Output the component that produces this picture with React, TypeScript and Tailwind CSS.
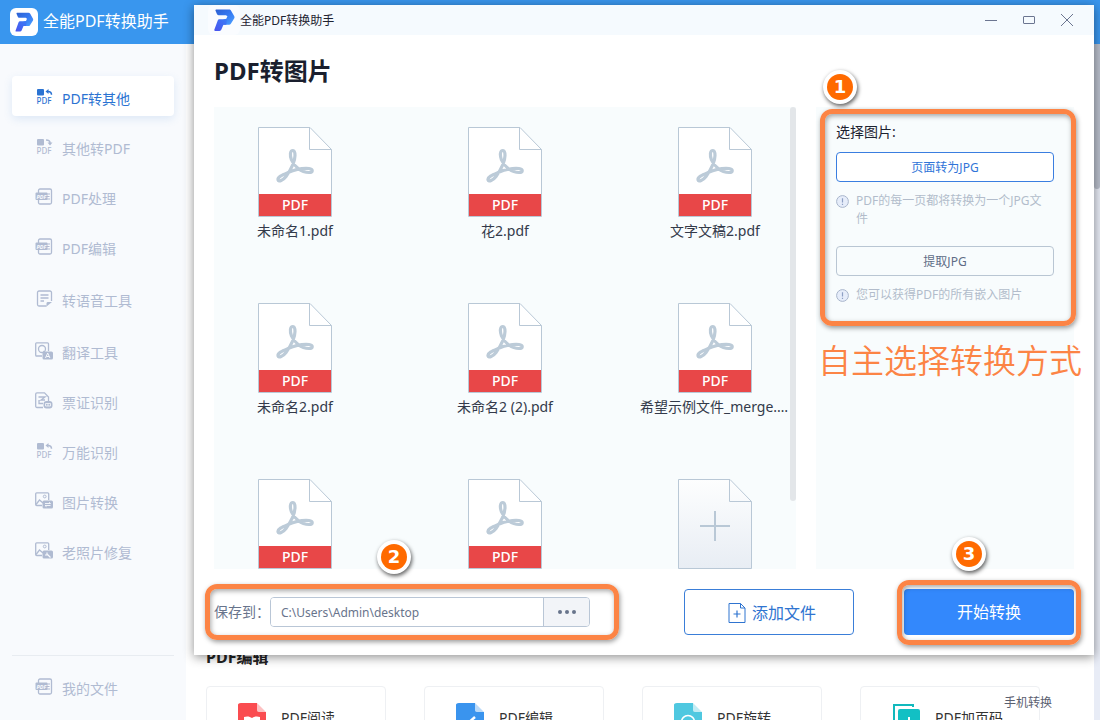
import React from "react";

const FONT = "font-['Noto_Sans','Noto_Sans_CJK_SC',sans-serif]";

function Logo({ className }: { className: string }) {
  return (
    <svg viewBox="0 0 28 28" className={className} aria-hidden="true">
      <defs>
        <linearGradient id="logoTop" x1="0" y1="0" x2="1" y2="1">
          <stop offset="0" stopColor="#2c5fd0" />
          <stop offset="0.5" stopColor="#3579f2" />
          <stop offset="1" stopColor="#4ea2ff" />
        </linearGradient>
        <linearGradient id="logoStem" x1="0" y1="1" x2="1" y2="0">
          <stop offset="0" stopColor="#4a52ee" />
          <stop offset="1" stopColor="#3b7cf6" />
        </linearGradient>
      </defs>
      <path
        d="M7.500 4.800h11c.8 0 1.300.3 1.700 1l2.800 5c.3.600.3 1 0 1.600l-3 4.800c-.4.600-.9.900-1.600.9H13l.5-4.600 2.500-.5 1-2.200-1.300-1H9.300c-.8 0-1.200-.3-1.500-1L6.600 6c-.3-.7 0-1.200.9-1.200z"
        fill="url(#logoTop)"
      />
      <path d="M10 13.300h6.500l-.5 4.800h-2.500l-1.900 4.500c-.3.700-.8 1-1.500 1H6.300c-.7 0-1-.5-.7-1.200l3-8.100c.2-.6.700-1 1.400-1z" fill="url(#logoStem)" />
    </svg>
  );
}

type IconKind = "left" | "right" | "pdf" | "note" | "translate" | "ticket" | "image" | "photo";

function SideIcon({ kind }: { kind: IconKind }) {
  if (kind === "left" || kind === "right") {
    return (
      <svg viewBox="0 0 18 18" className="size-[18px] shrink-0" fill="currentColor" aria-hidden="true">
        <rect x="2" y="1" width="7" height="6.500" rx="1" />
        {kind === "left" ? (
          <g>
            <path d="M10.500 3.500 13.500 1v5z" />
            <path d="M13 3.500c2.500 0 3.500 1 3.500 3.300" fill="none" stroke="currentColor" strokeWidth="1.500" />
          </g>
        ) : (
          <g>
            <path d="M12.500 4.500h5L15 7.500z" />
            <path d="M11 2c3 0 4 .8 4 3" fill="none" stroke="currentColor" strokeWidth="1.500" />
          </g>
        )}
        <text x="1.500" y="16" fontSize="8" fontFamily="Noto Sans, sans-serif" fontWeight="500">PDF</text>
      </svg>
    );
  }
  if (kind === "pdf") {
    return (
      <svg viewBox="0 0 18 18" className="size-[18px] shrink-0" fill="none" stroke="currentColor" aria-hidden="true">
        <rect x="3.500" y="1" width="13" height="15" rx="1.500" strokeWidth="1.300" />
        <rect x="0.500" y="4.500" width="12" height="7.500" rx="1" fill="currentColor" stroke="none" />
        <path d="M12 6h3M12 8.500h2.500M12 11h3" strokeWidth="1" />
        <text x="1.500" y="10.500" fontSize="5.500" fontWeight="700" fontStyle="italic" fill="#f8fafd" stroke="none" fontFamily="Noto Sans, sans-serif">PDF</text>
      </svg>
    );
  }
  if (kind === "note") {
    return (
      <svg viewBox="0 0 18 18" className="size-[18px] shrink-0" fill="none" stroke="currentColor" strokeWidth="1.300" aria-hidden="true">
        <path d="M16.500 11V2.500c0-.8-.7-1.500-1.500-1.500H4c-.8 0-1.500.7-1.500 1.500v12c0 .8.700 1.500 1.500 1.500h7.500M5.500 5h8M5.500 8h8M5.500 11H9" />
        <path d="M11.500 16.500v-3c0-1 .5-1.500 1.500-1.500h4z" fill="currentColor" stroke="none" />
      </svg>
    );
  }
  if (kind === "translate") {
    return (
      <svg viewBox="0 0 18 18" className="size-[18px] shrink-0" fill="none" stroke="currentColor" strokeWidth="1.300" aria-hidden="true">
        <path d="M7 14H1.500C1 14 .7 13.600.7 13V1.700C.7 1.200 1 .8 1.500.8h11c.6 0 1 .4 1 .9V9" />
        <circle cx="7" cy="7" r="3.500" />
        <path d="m8.500 9 2 2.500" />
        <rect x="7.500" y="9.500" width="10.500" height="8" rx="1.500" fill="currentColor" stroke="none" />
        <path d="m10.500 16 2.200-5 2.200 5M11.500 14.500h2.600" stroke="#f8fafd" strokeWidth="1" />
      </svg>
    );
  }
  if (kind === "ticket") {
    return (
      <svg viewBox="0 0 18 18" className="size-[18px] shrink-0" fill="none" stroke="currentColor" strokeWidth="1.300" aria-hidden="true">
        <path d="M8 15.500H2c-.8 0-1.300-.5-1.300-1.300V2C.7 1.300 1.200.8 2 .8h7.500L13.500 5v4M3.500 5H10L6 8h4M4 8v3.500h4" />
        <rect x="8.500" y="9" width="9" height="7.500" rx="3" fill="currentColor" stroke="none" />
        <path d="M10.500 11.500h5v2.500h-5zM13 11.500v2.500" stroke="#f8fafd" strokeWidth=".8" />
      </svg>
    );
  }
  return (
    <svg viewBox="0 0 18 18" className="size-[18px] shrink-0" fill="none" stroke="currentColor" strokeWidth="1.300" aria-hidden="true">
      <path d="M7 13.500H1.700c-.6 0-1-.4-1-1V1.800c0-.6.4-1 1-1h11c.6 0 1 .4 1 1V8" />
      <path d="M1 12.500 4.500 8l3.500 3" />
      <circle cx="9.700" cy="4.500" r="1.400" strokeWidth="1" />
      <rect x="7.500" y="8.500" width="10.500" height="8" rx="1.500" fill="currentColor" stroke="none" />
      {kind === "image" ? (
        <path d="M10 11.500h5.500L14 10.300M15.500 13.500H10l1.500 1.200" stroke="#f8fafd" strokeWidth=".9" />
      ) : (
        <path d="m12.500 12.500 3 3M12 10.500v2.500h-2" stroke="#f8fafd" strokeWidth="1.200" />
      )}
    </svg>
  );
}

const NAV: { label: string; kind: IconKind; tall?: boolean }[] = [
  { label: "PDF转其他", kind: "left" },
  { label: "其他转PDF", kind: "right" },
  { label: "PDF处理", kind: "pdf" },
  { label: "PDF编辑", kind: "pdf" },
  { label: "转语音工具", kind: "note", tall: true },
  { label: "翻译工具", kind: "translate" },
  { label: "票证识别", kind: "ticket" },
  { label: "万能识别", kind: "left" },
  { label: "图片转换", kind: "image" },
  { label: "老照片修复", kind: "photo" },
];

const FILES: { id: number; name?: string }[] = [
  { id: 1, name: "未命名1.pdf" },
  { id: 2, name: "花2.pdf" },
  { id: 3, name: "文字文稿2.pdf" },
  { id: 4, name: "未命名2.pdf" },
  { id: 5, name: "未命名2 (2).pdf" },
  { id: 6, name: "希望示例文件_merge.pdf" },
  { id: 7 },
  { id: 8 },
];

function PdfFileIcon() {
  return (
    <svg viewBox="0 0 74 90" className="h-[90px] w-[74px] shrink-0" fill="none" aria-hidden="true">
      <path d="M.5.500h51.500l21.500 22v67H.5z" fill="#fff" stroke="#b9c8d6" />
      <path d="M51.500.500v22h22" stroke="#b9c8d6" />
      <path
        d="M35 23.500c-3 0-3.300 4.500-1.500 9.500C36 39 43 45.500 51 45.500c4.300 0 4.300-3.600 0-4-7-.6-14 1-21 4-6 2.600-10.500 4.500-10 7.300.6 2.600 5 .6 8-3.300 4.500-6.300 9-15 9-21 0-3.300-.6-5-2-5z"
        stroke="#bccbd8"
        strokeWidth="3.200"
        strokeLinejoin="round"
      />
      <rect x="1" y="67" width="72" height="22" fill="#e84748" />
      <text x="37" y="83" fontSize="14" fontWeight="500" fill="#fff" textAnchor="middle" fontFamily="Noto Sans, sans-serif">PDF</text>
    </svg>
  );
}

function AddFileTile() {
  return (
    <svg viewBox="0 0 74 90" className="h-[90px] w-[74px] shrink-0" fill="none" aria-hidden="true">
      <defs>
        <linearGradient id="tile" x1="0" y1="0" x2="0" y2="1">
          <stop offset="0" stopColor="#fdfefe" />
          <stop offset="1" stopColor="#e8edf4" />
        </linearGradient>
      </defs>
      <path d="M.5.500h51.500l21.500 22v67H.5z" fill="url(#tile)" stroke="#b9c8d6" />
      <path d="M51.500.500v22h22" stroke="#b9c8d6" />
      <path d="M22 47h30M37 32v30" stroke="#b9c8d6" strokeWidth="2" />
    </svg>
  );
}

function Step({ n, className }: { n: number; className: string }) {
  return (
    <span
      className={`absolute z-10 flex size-[34px] items-center justify-center rounded-full bg-white shadow-[1px_2px_4px_rgba(0,0,0,0.65)] ${className}`}
    >
      <span className="flex size-[26px] items-center justify-center rounded-full bg-[#ff6a00] font-['DejaVu_Sans',sans-serif] text-[18px] leading-none font-bold text-white">
        {n}
      </span>
    </span>
  );
}

function Frame({ className }: { className: string }) {
  return (
    <span
      className={`pointer-events-none absolute rounded-xl border-[5px] border-[#fc8445] shadow-[1px_2px_5px_rgba(0,0,0,0.4),inset_1px_2px_5px_rgba(0,0,0,0.35)] ${className}`}
    />
  );
}

function Hint({ children }: { children: React.ReactNode }) {
  return (
    <p className="flex gap-[7px] pr-2 text-xs leading-[18px] text-[#b2bccb]">
      <svg viewBox="0 0 13 13" className="mt-[3px] size-[13px] shrink-0" fill="none" aria-hidden="true">
        <circle cx="6.500" cy="6.500" r="5.900" fill="#e6edfa" stroke="#a9b6cc" />
        <path d="M6.500 3.300v4.200M6.500 8.700V10" stroke="#8ea0c4" strokeWidth="1.200" />
      </svg>
      <span>{children}</span>
    </p>
  );
}

function CardIcon({ kind }: { kind: string }) {
  if (kind === "page") {
    return (
      <svg viewBox="0 0 28 32" className="h-8 w-7 shrink-0" fill="none" aria-hidden="true">
        <path d="M21 5V3H2v22h4" stroke="#12b9bd" strokeWidth="2" />
        <rect x="6" y="7" width="22" height="24" rx="2" fill="#12c0c4" />
        <path d="M17 15v9M12 20h10" stroke="#fff" strokeWidth="2" />
      </svg>
    );
  }
  const color = kind === "read" ? "#fa4c50" : kind === "edit" ? "#3a94ee" : "#4fc8e0";
  return (
    <svg viewBox="0 0 28 32" className="h-8 w-7 shrink-0" fill="none" aria-hidden="true">
      <path d="M3 1h17l8 9v19c0 1-1 2-2 2H2c-1.500 0-2-1-2-2V3c0-1 .5-2 3-2z" fill={color} />
      <path d="M19 0h9v10h-7c-1 0-2-1-2-2z" fill="#fff" />
      <path d="M19 1l9 9h-7c-1 0-2-1-2-2z" fill={color} fillOpacity=".35" />
      {kind === "read" && <path d="M6 15c3-1 6-.5 8 1 2-1.500 5-2 8-1v9c-3-1-6-.5-8 1-2-1.500-5-2-8-1z" fill="#fff" />}
      {kind === "edit" && <path d="m11 22 8-7" stroke="#fff" strokeWidth="2.500" />}
      {kind === "rotate" && <circle cx="14" cy="20" r="6.500" stroke="#fff" strokeWidth="1.500" />}
    </svg>
  );
}

const CARDS = [
  { label: "PDF阅读", kind: "read" },
  { label: "PDF编辑", kind: "edit" },
  { label: "PDF旋转", kind: "rotate" },
  { label: "PDF加页码", kind: "page" },
];

function ConvertDialog() {
  return (
    <section
      role="dialog"
      aria-label="PDF转图片"
      className="absolute top-[5px] right-[6px] left-[194px] bg-white shadow-[0_2px_10px_rgba(0,0,0,0.45)]"
    >
      <header className="flex h-[30px] items-center bg-[#f5fafe] pr-5 pl-[14px]">
        <span className="flex h-[30px] w-8 items-center justify-center rounded-md bg-[#fafcff]">
          <Logo className="size-8" />
        </span>
        <span className="grow pt-[2px] text-xs text-[#1d2230]">全能PDF转换助手</span>
        <div className="flex gap-6 text-[#6b7590]">
          <button type="button" aria-label="最小化">
            <svg viewBox="0 0 14 14" className="size-[14px]" stroke="currentColor" fill="none"><path d="M1 7.500h12" /></svg>
          </button>
          <button type="button" aria-label="最大化">
            <svg viewBox="0 0 14 14" className="size-[14px]" stroke="currentColor" fill="none"><rect x="1.500" y="3.500" width="11" height="7" rx=".5" /></svg>
          </button>
          <button type="button" aria-label="关闭">
            <svg viewBox="0 0 14 14" className="size-[14px]" stroke="currentColor" fill="none"><path d="m1 1 12 12M13 1 1 13" /></svg>
          </button>
        </div>
      </header>

      <div className="px-5 pb-5">
        <h1 className="flex h-[72px] items-center text-2xl font-bold text-[#1a1f2e]">PDF转图片</h1>
        <div className="flex gap-5">
          <div className="flex h-[462px] grow overflow-hidden bg-[#f8fcfd]">
            <ul className="grid grow grid-cols-[repeat(3,150px)] content-start gap-x-[60px] pt-5 pl-[6px]">
              {FILES.map((file) => (
                <li key={file.id} className="flex h-[176px] flex-col items-center">
                  <PdfFileIcon />
                  {file.name && <span className="mt-1 w-full truncate text-center text-sm text-[#333a4a]">{file.name}</span>}
                </li>
              ))}
              <li className="flex h-[176px] flex-col items-center">
                <button type="button" aria-label="添加"><AddFileTile /></button>
              </li>
            </ul>
            <div className="h-[394px] w-[6px] shrink-0 rounded-full bg-[#e3e6e9]" />
          </div>

          <aside className="relative w-[258px] shrink-0 bg-[#f8fcfd] px-5">
            <Step n={1} className="top-[-37px] left-[7px]" />
            <Frame className="top-[2px] -right-[2px] left-[4px] h-[217px]" />
            <p className="flex h-[45px] items-end pb-[10px] text-sm text-[#1d2230]">选择图片:</p>
            <button type="button" className="mb-[10px] block h-[30px] w-full rounded border border-[#3a7ee0] bg-white pt-[2px] text-xs text-[#2f74d8]">
              页面转为JPG
            </button>
            <Hint>PDF的每一页都将转换为一个JPG文件</Hint>
            <button type="button" className="mt-[18px] mb-[10px] block h-[30px] w-full rounded border border-[#b9c6d3] pt-[2px] text-xs text-[#5f6c86]">
              提取JPG
            </button>
            <Hint>您可以获得PDF的所有嵌入图片</Hint>
            <p className="absolute top-[228px] left-[2px] font-['Noto_Sans_CJK_SC',sans-serif] text-[33px] leading-[48px] font-[350] whitespace-nowrap text-[#fc8445]">
              自主选择转换方式
            </p>
          </aside>
        </div>

        <footer className="mt-5 flex items-center">
          <div className="relative flex w-[376px] items-center">
            <Step n={2} className="top-[-57px] left-[163px]" />
            <Frame className="-top-[13px] -right-[29px] -bottom-[13px] -left-[9px]" />
            <label htmlFor="target" className="w-14 shrink-0 text-sm whitespace-nowrap text-[#68748c]">保存到：</label>
            <div className="flex h-[30px] min-w-0 grow overflow-hidden rounded border border-[#b9c6d6]">
              <input id="target" defaultValue="C:\Users\Admin\desktop" className="min-w-0 grow bg-white px-[10px] pt-[2px] text-xs text-[#68748c] outline-none" />
              <button type="button" aria-label="浏览" className="flex w-[46px] shrink-0 items-center justify-center gap-[3px] border-l border-[#b9c6d6] bg-[#f2f4f8]">
                <i className="size-1 rounded-full bg-[#68748c]" />
                <i className="size-1 rounded-full bg-[#68748c]" />
                <i className="size-1 rounded-full bg-[#68748c]" />
              </button>
            </div>
          </div>
          <button type="button" className="mr-[50px] ml-auto flex h-[46px] w-[170px] items-center justify-center gap-[6px] rounded border border-[#3a7ed8] pt-[2px] pl-[6px] text-base text-[#2f74d0]">
            <svg viewBox="0 0 18 20" className="h-5 w-[18px]" fill="none" stroke="currentColor" aria-hidden="true">
              <path d="M1 .5h11.500l4.500 4.500v14.500H1zM12.500.5V5H17" />
              <path d="M5.500 11h7M9 7.500v7" strokeWidth="1.200" />
            </svg>
            添加文件
          </button>
          <div className="relative">
            <Step n={3} className="top-[-52px] left-[48px]" />
            <button type="button" className="block h-[46px] w-[170px] rounded bg-[#3388fc] text-base text-white">开始转换</button>
            <Frame className="-top-[9px] -right-[7px] -bottom-[10px] -left-[7px]" />
          </div>
        </footer>
      </div>
    </section>
  );
}

export default function App() {
  return (
    <div className={`relative flex h-screen flex-col overflow-hidden bg-white ${FONT}`}>
      <header className="flex h-11 shrink-0 items-center gap-[5px] bg-[#3996ee] pl-[10px]">
        <span className="flex size-7 items-center justify-center rounded-md bg-white">
          <Logo className="size-7" />
        </span>
        <span className="pb-[2px] text-base text-white">全能PDF转换助手</span>
      </header>
      <div className="flex min-h-0 grow">
        <nav className="flex w-[186px] shrink-0 flex-col bg-[#f8fafd] px-3 pt-8 text-sm text-[#b0bbd2]">
          <ul className="flex flex-col gap-[10px]">
            {NAV.map((item, i) => (
              <li key={item.label}>
                <a
                  href="#"
                  className={`flex items-center gap-[9px] rounded pt-[2px] pl-[23px] ${item.tall ? "h-11" : "h-10"} ${
                    i === 0 ? "bg-white text-[#2b73d2] shadow-[0_3px_8px_rgba(90,140,210,0.16)]" : ""
                  }`}
                >
                  <SideIcon kind={item.kind} />
                  <span className="pt-1">{item.label}</span>
                </a>
              </li>
            ))}
          </ul>
          <div className="mt-auto border-t border-[#e8ecf1] pt-[11px] pb-[13px]">
            <a href="#" className="flex h-10 items-center gap-[9px] pl-[23px]">
              <SideIcon kind="pdf" />
              <span className="pt-1">我的文件</span>
            </a>
          </div>
        </nav>
        <main className="relative min-w-0 grow overflow-hidden pt-[601px] pl-5">
          <h2 className="text-base font-bold text-[#222]">PDF编辑</h2>
          <div className="mt-[17px] flex gap-[38px]">
            {CARDS.map((card) => (
              <a key={card.label} href="#" className="flex h-16 w-[180px] shrink-0 items-center gap-[15px] rounded border border-[#eef0f3] pl-[31px] text-sm text-[#333]">
                <CardIcon kind={card.kind} />
                {card.label}
              </a>
            ))}
          </div>
          <a href="#" className="absolute right-[42px] bottom-[9px] text-xs text-[#5a6070]">手机转换</a>
        </main>
        <div className="w-[6px] shrink-0 bg-[#e8ecf6]">
          <div className="h-[145px] rounded-b-full bg-[#b9bfcc]" />
        </div>
      </div>
      <ConvertDialog />
    </div>
  );
}
